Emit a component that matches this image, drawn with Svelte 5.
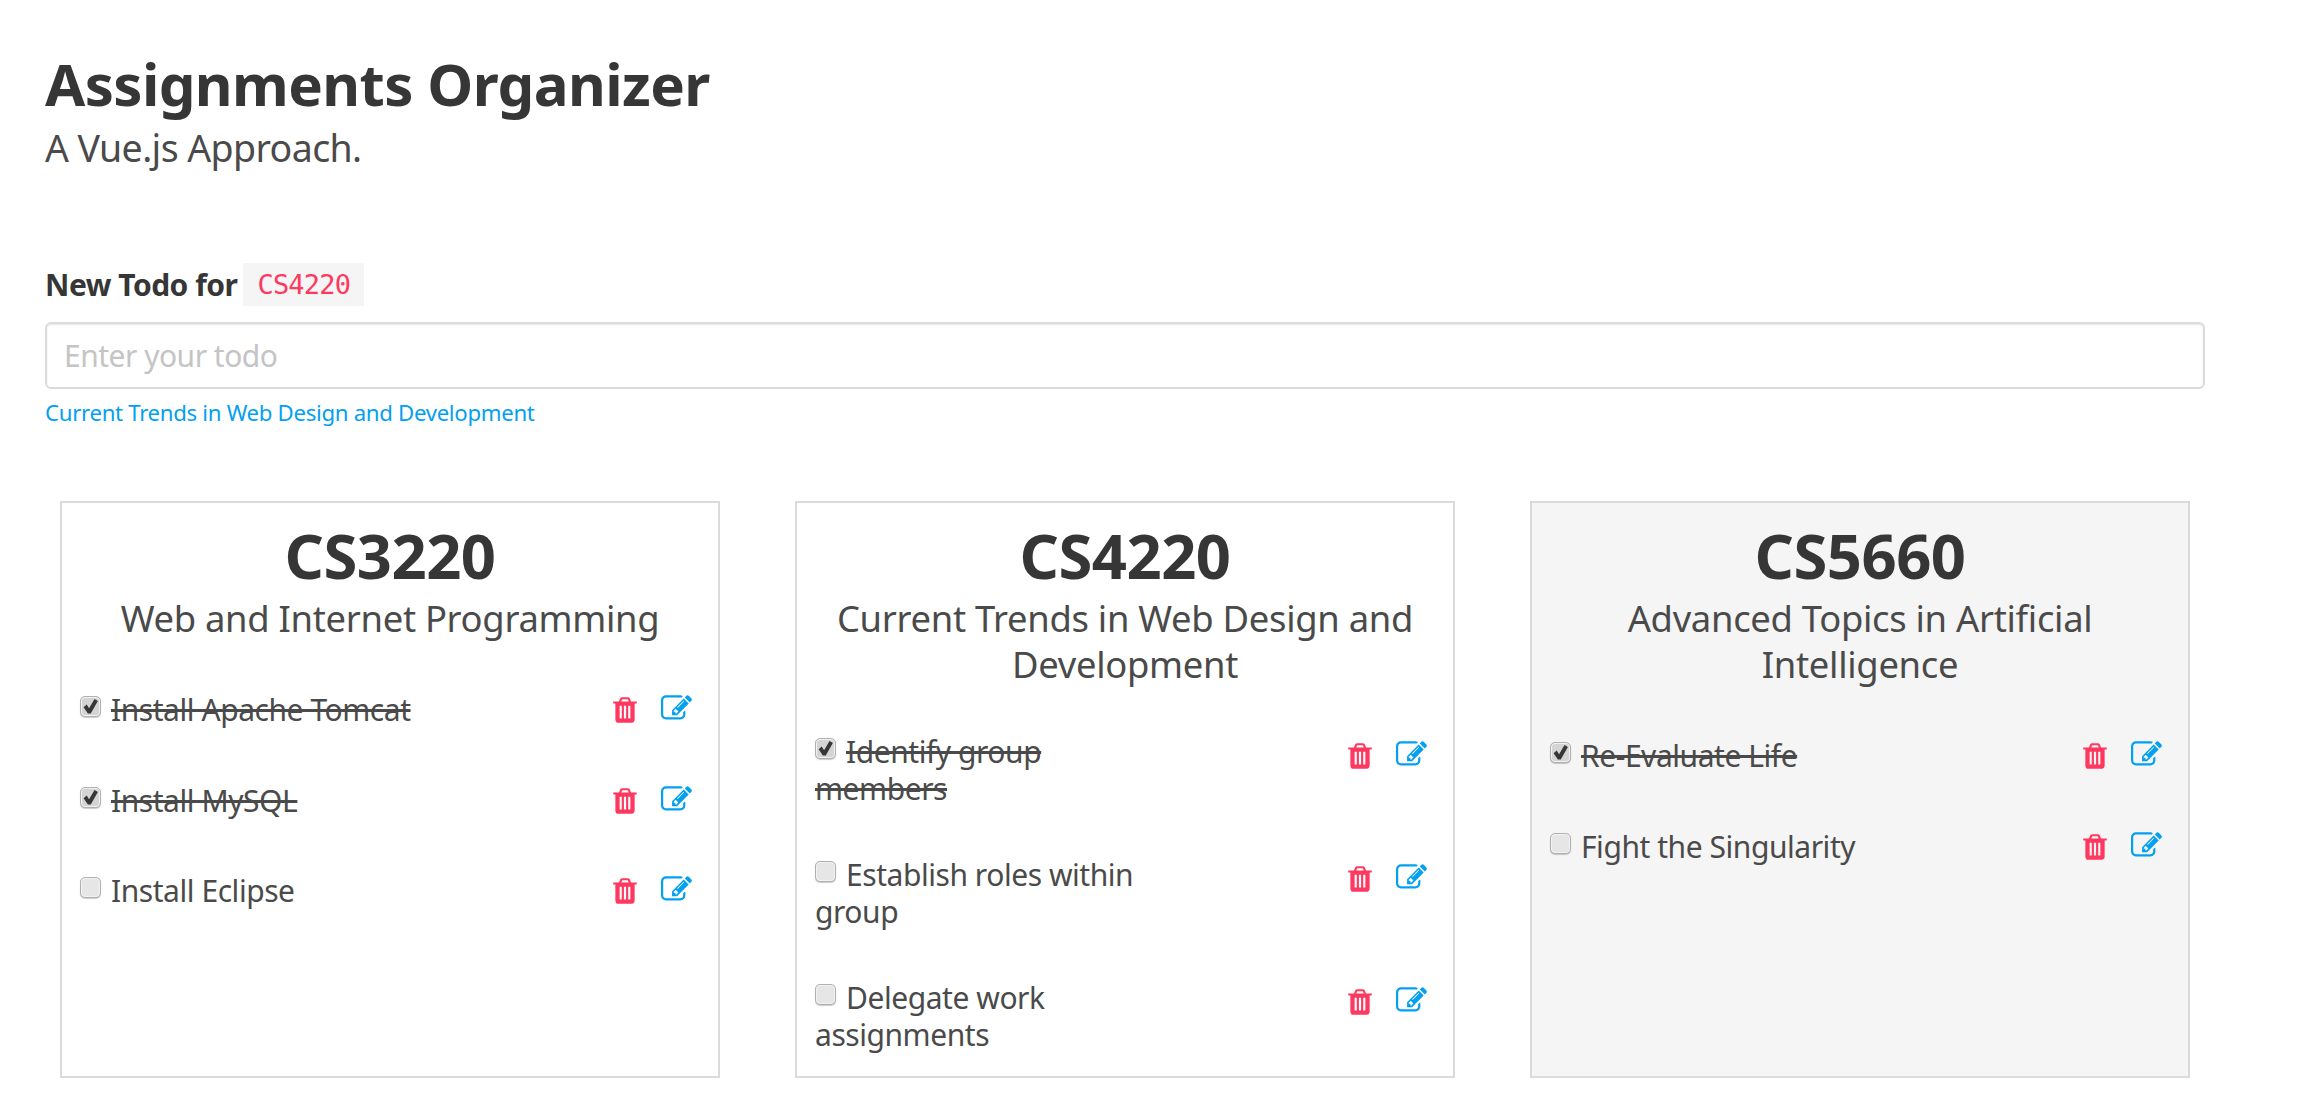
<script>
  const courses = [
    { code: 'CS3220', name: 'Web and Internet Programming', todos: [
      { text: 'Install Apache Tomcat', done: true },
      { text: 'Install MySQL', done: true },
      { text: 'Install Eclipse', done: false } ] },
    { code: 'CS4220', name: 'Current Trends in Web Design and Development', narrow: true, todos: [
      { text: 'Identify group members', done: true },
      { text: 'Establish roles within group', done: false },
      { text: 'Delegate work assignments', done: false } ] },
    { code: 'CS5660', name: 'Advanced Topics in Artificial Intelligence', muted: true, todos: [
      { text: 'Re-Evaluate Life', done: true },
      { text: 'Fight the Singularity', done: false } ] }
  ];
</script>

<main class="page">
  <header class="head">
    <h1>Assignments Organizer</h1>
    <h2>A Vue.js Approach.</h2>
  </header>

  <section class="form">
    <div class="label"><strong>New Todo for</strong> <code>CS4220</code></div>
    <input class="input" type="text" placeholder="Enter your todo" />
    <p class="help">Current Trends in Web Design and Development</p>
  </section>

  <section class="columns">
    {#each courses as c}
      <article class="card" class:muted={c.muted}>
        <h3>{c.code}</h3>
        <h4>{c.name}</h4>
        <ul class:wide={c.narrow}>
          {#each c.todos as t}
            <li>
              <div class="todo" class:done={t.done}>
                <span class="box" class:on={t.done}>
                  {#if t.done}
                    <svg viewBox="0 0 16 16"><path d="M2.2 8.6l2.6-2.2 2 3L11.4 1.6l2.8 1.7-6 10.6H5.8z" /></svg>
                  {/if}
                </span><span class="txt">{t.text}</span>
              </div>
              <div class="acts">
                <svg class="trash" viewBox="0 0 1792 1792"><path d="M704 1376v-704q0-14-9-23t-23-9h-64q-14 0-23 9t-9 23v704q0 14 9 23t23 9h64q14 0 23-9t9-23zm256 0v-704q0-14-9-23t-23-9h-64q-14 0-23 9t-9 23v704q0 14 9 23t23 9h64q14 0 23-9t9-23zm256 0v-704q0-14-9-23t-23-9h-64q-14 0-23 9t-9 23v704q0 14 9 23t23 9h64q14 0 23-9t9-23zm-544-992h448l-48-117q-7-9-17-11h-317q-10 2-17 11zm928 32v64q0 14-9 23t-23 9h-96v948q0 83-47 143.5t-113 60.5h-832q-66 0-113-58.5t-47-141.5v-952h-96q-14 0-23-9t-9-23v-64q0-14 9-23t23-9h309l70-167q15-37 54-63t79-26h320q40 0 79 26t54 63l70 167h309q14 0 23 9t9 23z" /></svg>
                <svg class="edit" viewBox="0 0 1792 1792"><path d="M888 1184l116-116-152-152-116 116v56h96v96h56zm440-720q-16-16-33 1l-350 350q-17 17-1 33t33-1l350-350q17-17 1-33zm80 594v190q0 119-84.5 203.5t-203.5 84.5h-832q-119 0-203.5-84.5t-84.5-203.5v-832q0-119 84.5-203.5t203.5-84.5h832q63 0 117 25 15 7 18 23 3 17-9 29l-49 49q-14 14-32 8-23-6-45-6h-832q-66 0-113 47t-47 113v832q0 66 47 113t113 47h832q66 0 113-47t47-113v-126q0-13 9-22l64-64q15-15 35-7t20 29zm-96-738l288 288-672 672h-288v-288zm444 132l-92 92-288-288 92-92q28-28 68-28t68 28l152 152q28 28 28 68t-28 68z" /></svg>
              </div>
            </li>
          {/each}
        </ul>
      </article>
    {/each}
  </section>
</main>

<style>
  :global(body) { margin: 0; background: #fff; }
  .page {
    box-sizing: border-box;
    width: 2324px;
    height: 1119px;
    overflow: hidden;
    padding: 48px 119px 0 45px;
    font-family: "Noto Sans", sans-serif;
    color: #4a4a4a;
  }
  h1, h2, h3, h4, p, ul { margin: 0; padding: 0; }
  h1 { font-size: 58.2px; line-height: 72px; font-weight: 700; color: #363636; letter-spacing: -0.6px; }
  h2 { font-size: 37.5px; line-height: 46px; margin-top: 5px; font-weight: 400; color: #4a4a4a; letter-spacing: -0.6px; }
  .form { margin-top: 92px; }
  .label { display: flex; align-items: center; gap: 6px; height: 43px; font-size: 30px; color: #363636; }
  .label strong { font-weight: 700; letter-spacing: -0.5px; }
  code { background: #f5f5f5; color: #ff3860; font-family: "DejaVu Sans Mono", monospace; font-size: 27px; padding: 0 14px; line-height: 43px; letter-spacing: -0.8px; }
  .input {
    display: block; box-sizing: border-box; width: 100%; height: 67px; margin-top: 16px;
    border: 2px solid #dbdbdb; border-radius: 6px; padding: 0 17px;
    box-shadow: inset 0 1px 2px rgba(10,10,10,.1);
    font: 30px "Noto Sans", sans-serif; letter-spacing: -0.5px; color: #363636; outline: 0;
  }
  .input::placeholder { color: #c4c4c4; opacity: 1; }
  .help { margin-top: 9px; font-size: 22.2px; line-height: 30px; color: #03a0f0; letter-spacing: -0.3px; }
  .columns { display: flex; gap: 75px; margin-top: 73px; padding-left: 15px; }
  .card {
    box-sizing: border-box; width: 660px; height: 577px; flex: none;
    border: 2px solid #dbdbdb; background: #fff; padding: 16px 18px 0;
    text-align: center;
  }
  .card.muted { background: #f5f5f5; }
  h3 { font-size: 61.5px; line-height: 72px; font-weight: 700; color: #363636; letter-spacing: -0.5px; }
  h4 { font-size: 36.4px; line-height: 46px; font-weight: 400; color: #4a4a4a; letter-spacing: -0.3px; margin-top: 4px; }
  ul { list-style: none; text-align: left; margin-top: 39px; padding-right: 8px; }
  li { display: flex; justify-content: space-between; align-items: flex-start; padding: 0; min-height: 90.6px; }
  ul.wide li { min-height: 123px; }
  ul.wide .todo { max-width: 360px; padding-top: 7px; }
  .todo { font-size: 30px; line-height: 37px; padding-top: 11px; letter-spacing: -0.45px; }
  .done .txt { text-decoration: line-through; }
  .box {
    display: inline-block; box-sizing: border-box; width: 21px; height: 21px; margin-right: 10px;
    vertical-align: 4px;
    border: 1px solid #b0b0b0; border-radius: 5px; background: #e6e6e6;
    box-shadow: 0 1px 1px rgba(0,0,0,.2), inset 0 0 0 1px #f2f2f2;
  }
  .box.on { background: #d4d4d4; }
  .box svg { display: block; width: 19px; height: 19px; }
  .box svg path { fill: #363636; }
  .acts { display: flex; gap: 21px; padding-top: 15px; align-items: flex-start; }
  .trash { width: 30px; height: 30px; }
  .trash path { fill: #ff3860; }
  .edit { width: 31px; height: 31px; margin-top: -2px; }
  .edit path { fill: #03a0f0; }
</style>
